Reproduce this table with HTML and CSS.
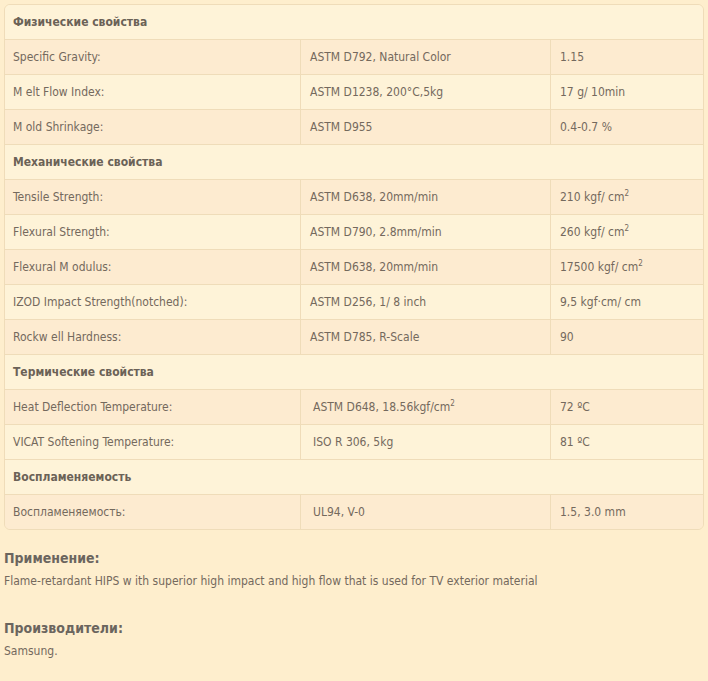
FILE: index.html
```html
<!DOCTYPE html>
<html lang="ru">
<head>
<meta charset="utf-8">
<link rel="stylesheet" href="styles.css">
</head>
<body>
<div class="page">
<table class="props">
  <colgroup><col class="c1"><col class="c2"><col class="c3"></colgroup>
  <tr class="sec"><td colspan="3">Физические свойства</td></tr>
  <tr class="dk"><td>Specific Gravity:</td><td>ASTM D792, Natural Color</td><td>1.15</td></tr>
  <tr class="lt"><td>M elt Flow Index:</td><td>ASTM D1238, 200°C,5kg</td><td>17 g/ 10min</td></tr>
  <tr class="dk"><td>M old Shrinkage:</td><td>ASTM D955</td><td>0.4-0.7 %</td></tr>
  <tr class="sec"><td colspan="3">Механические свойства</td></tr>
  <tr class="dk"><td>Tensile Strength:</td><td>ASTM D638, 20mm/min</td><td>210 kgf/ cm<sup>2</sup></td></tr>
  <tr class="lt"><td>Flexural Strength:</td><td>ASTM D790, 2.8mm/min</td><td>260 kgf/ cm<sup>2</sup></td></tr>
  <tr class="dk"><td>Flexural M odulus:</td><td>ASTM D638, 20mm/min</td><td>17500 kgf/ cm<sup>2</sup></td></tr>
  <tr class="lt"><td>IZOD Impact Strength(notched):</td><td>ASTM D256, 1/ 8 inch</td><td>9,5 kgf·cm/ cm</td></tr>
  <tr class="dk"><td>Rockw ell Hardness:</td><td>ASTM D785, R-Scale</td><td>90</td></tr>
  <tr class="sec"><td colspan="3">Термические свойства</td></tr>
  <tr class="dk"><td>Heat Deflection Temperature:</td><td class="ind">ASTM D648, 18.56kgf/cm<sup>2</sup></td><td>72 ºC</td></tr>
  <tr class="lt"><td>VICAT Softening Temperature:</td><td class="ind">ISO R 306, 5kg</td><td>81 ºC</td></tr>
  <tr class="sec"><td colspan="3">Воспламеняемость</td></tr>
  <tr class="dk"><td>Воспламеняемость:</td><td class="ind">UL94, V-0</td><td>1.5, 3.0 mm</td></tr>
</table>

<section class="block">
  <h3>Применение:</h3>
  <p>Flame-retardant HIPS w ith superior high impact and high flow that is used for TV exterior material</p>
</section>
<section class="block">
  <h3>Производители:</h3>
  <p>Samsung.</p>
</section>
</div>
</body>
</html>
```

FILE: styles.css
```css
html, body {
  margin: 0;
  padding: 0;
  background: #feeecd;
}
body {
  font-family: "DejaVu Sans Condensed", "DejaVu Sans", sans-serif;
  font-size: 12px;
  color: #74695d;
}
.page {
  padding: 4px;
}
.props {
  width: 700px;
  border-collapse: separate;
  border-spacing: 0;
  border: 1px solid #efdcb9;
  border-radius: 6px;
  overflow: hidden;
  table-layout: fixed;
}
.c1 { width: 295px; }
.c2 { width: 250px; }
.c3 { width: 153px; }
.props td {
  height: 34px;
  padding: 0 0 0 8px;
  vertical-align: middle;
  border-top: 1px solid #efdcb9;
  white-space: nowrap;
}
.props tr:first-child td {
  border-top: 0;
}
.props td + td {
  border-left: 1px solid #efdcb9;
  padding-left: 9px;
}
.props td.ind {
  padding-left: 12px;
}
.sec td {
  background: #fef3d8;
  font-weight: bold;
  color: #6b6257;
}
.dk td { background: #fdebd0; }
.lt td { background: #fef3d8; }
sup {
  font-size: 8px;
  vertical-align: 5px;
  line-height: 0;
}
.block {
  margin-top: 19px;
}
.block h3 {
  margin: 0;
  font-size: 14px;
  font-weight: bold;
  color: #6b655e;
  line-height: 18px;
}
.block p {
  margin: 6px 0 0;
  line-height: 16px;
}
.block + .block {
  margin-top: 30px;
}
```
